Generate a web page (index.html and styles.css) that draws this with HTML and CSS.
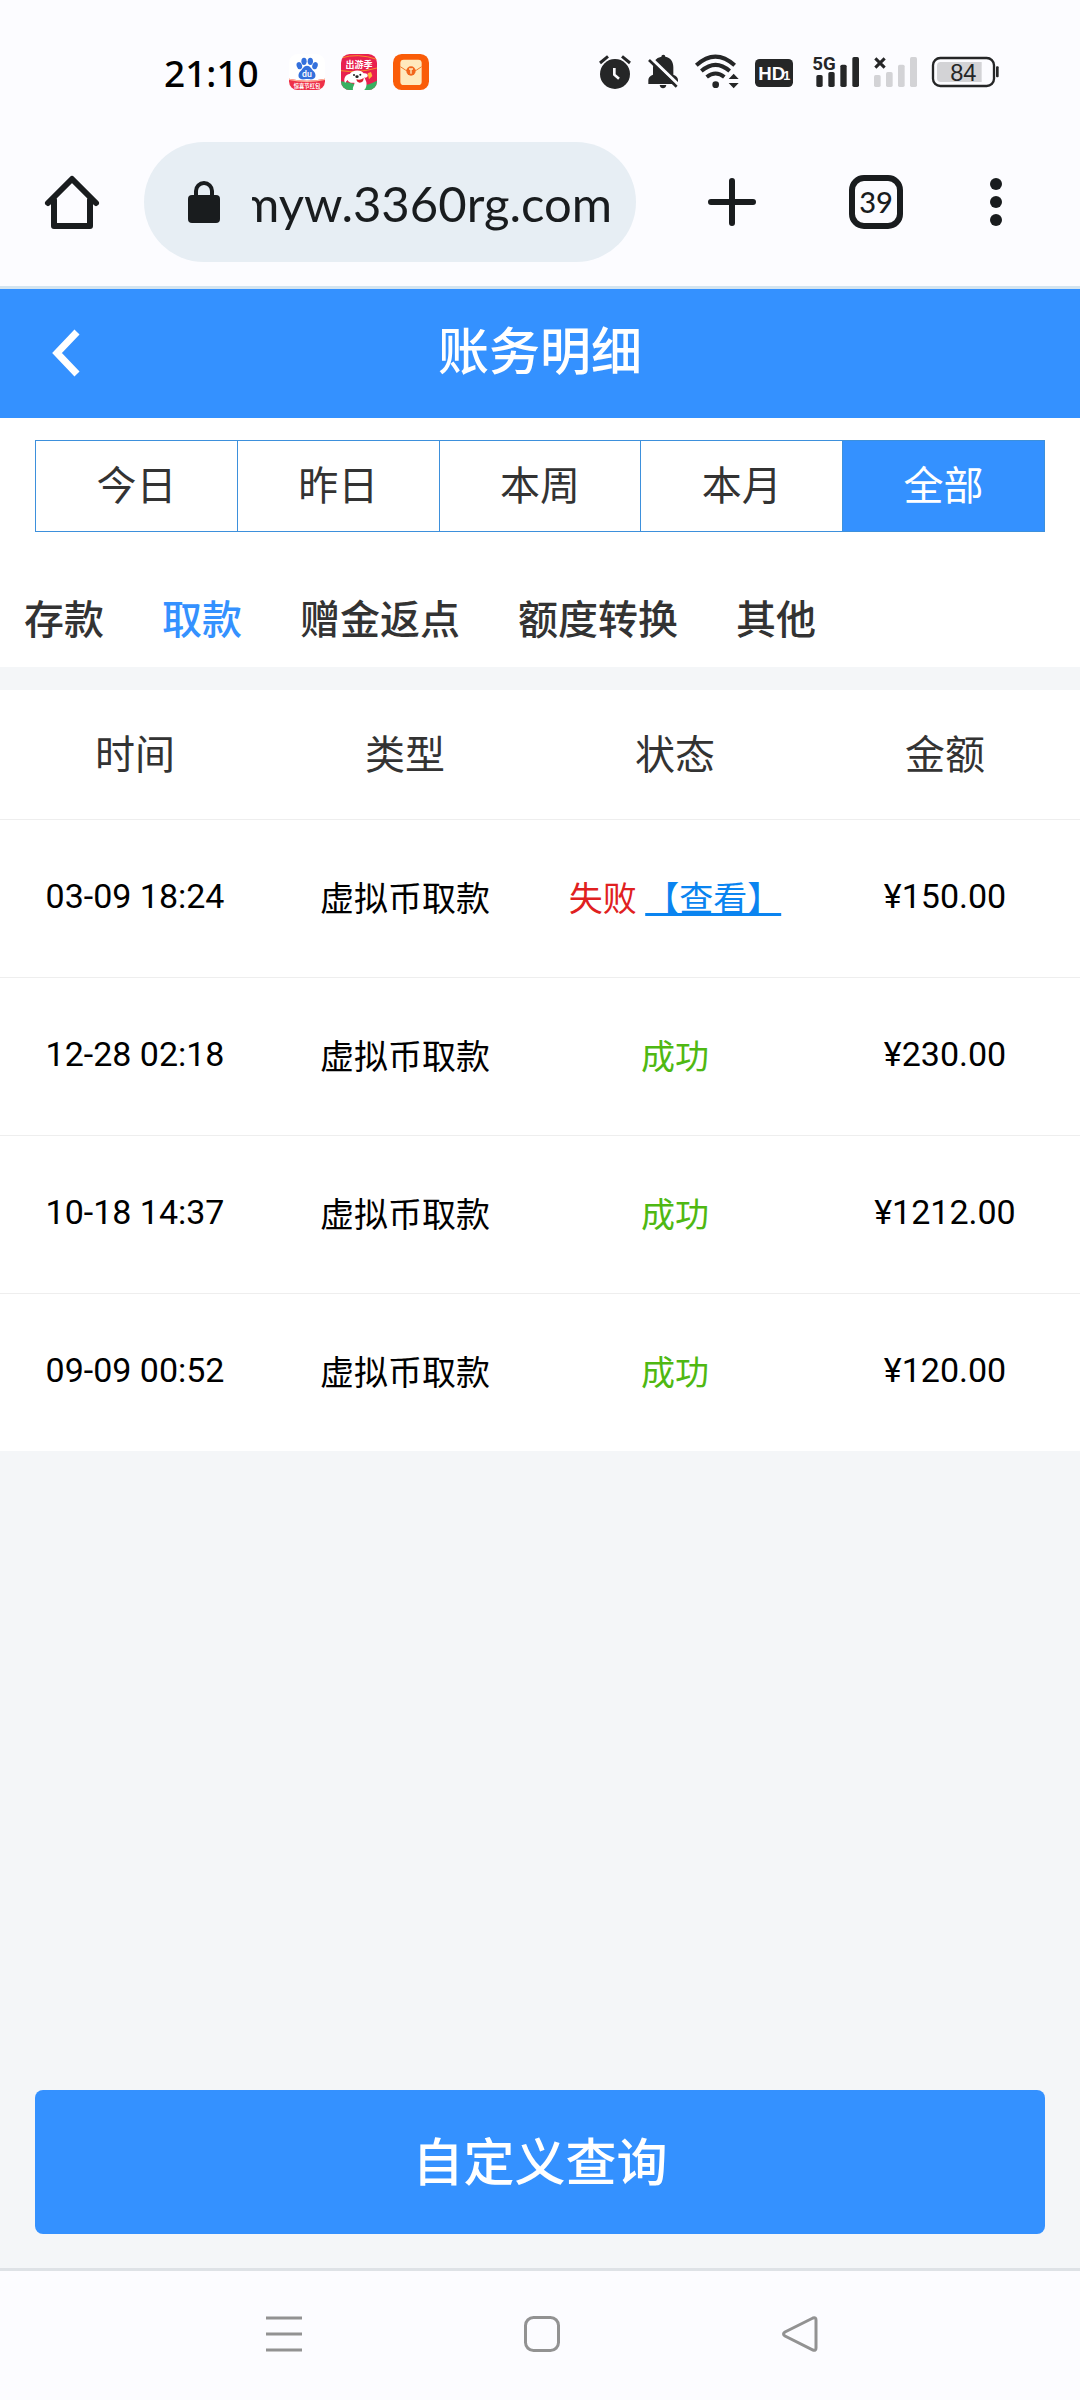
FILE: index.html
```html
<!DOCTYPE html>
<html lang="zh-CN">
<head>
<meta charset="utf-8">
<meta name="viewport" content="width=device-width">
<title>账务明细</title>
<link rel="stylesheet" href="styles.css">
</head>
<body>
<div class="status-bar">
  <span class="clock">21:10</span>
  <div class="app-icons">
    <svg class="app-icon" viewBox="0 0 108 108">
      <defs><clipPath id="tile"><rect width="108" height="108" rx="26"/></clipPath></defs>
      <g clip-path="url(#tile)">
        <rect width="108" height="108" fill="#fff"/>
        <g fill="#3470dc">
          <ellipse cx="31" cy="35" rx="8" ry="11" transform="rotate(-18 31 35)"/>
          <ellipse cx="45" cy="22" rx="8" ry="11"/>
          <ellipse cx="64" cy="22" rx="8" ry="11"/>
          <ellipse cx="78" cy="35" rx="8" ry="11" transform="rotate(18 78 35)"/>
          <path d="M54 35c-10 0-13 10-20 17-8 8-8 22 4 24 7 1 10-1 16-1s9 2 16 1c12-2 12-16 4-24-7-7-10-17-20-17z"/>
        </g>
        <text class="mark" x="54" y="69" font-size="26" text-anchor="middle">du</text>
        <path d="M0 74q54 12 108 0v34H0z" fill="#ee3048"/>
        <path d="M0 74q54 12 108 0v4q-54 12-108 0z" fill="#ffb49a"/>
        <text class="mark" x="54" y="101" font-size="16" text-anchor="middle">惊喜节红包</text>
      </g>
    </svg>
    <svg class="app-icon" viewBox="0 0 108 108">
      <g clip-path="url(#tile)">
        <rect width="108" height="108" fill="#e8204f"/>
        <path d="M0 12q50-16 108 4M0 50q50 8 108-8" fill="none" stroke="#f89028" stroke-width="3"/>
        <path d="M0 82q26 4 50 10t58-12v28H0z" fill="#38b060"/>
        <text class="mark" x="54" y="41" font-size="27" text-anchor="middle">出游季</text>
        <path d="M80 58l10-4 4 12-10 10z" fill="#ffb53c"/>
        <path d="M26 60c8-14 36-14 42-2 6-2 14 2 12 8-2 5-7 6-10 4l6 14c2 10-2 24-8 24H36c-2-10 6-16 4-22-10 2-18-2-20-8-6 4-6 10-8 8-6-10 2-26 14-26z" fill="#fff"/>
        <circle cx="39" cy="63" r="3" fill="#222"/><circle cx="58" cy="62" r="3" fill="#222"/>
        <ellipse cx="48" cy="68" rx="5" ry="4" fill="#222"/>
        <path d="M46 76q12 4 22-4 0 14-12 14-8 0-10-10z" fill="#d82030"/>
      </g>
    </svg>
    <svg class="app-icon" viewBox="0 0 108 108">
      <rect width="108" height="108" rx="26" fill="#fa5c08"/>
      <rect x="22" y="17" width="64" height="76" rx="10" fill="#ffe9bd"/>
      <path d="M22 38q16 14 32 14t32-14" fill="none" stroke="#f07828" stroke-width="3"/>
      <circle cx="54" cy="51" r="14" fill="#f2661c"/>
      <path d="M48 45h12M54 45v14" stroke="#ffe9bd" stroke-width="4"/>
    </svg>
  </div>
  <div class="system-icons">
    <svg width="33" height="36" viewBox="57 42 99 108">
      <circle cx="105" cy="102" r="45"/>
      <path d="M60 69l24-20M150 69l-24-20" stroke="#252627" stroke-width="9"/>
      <path d="M103 84v20l14 12" fill="none" stroke="#fcfcff" stroke-width="8"/>
    </svg>
    <svg width="31" height="36" viewBox="204 42 93 108">
      <path d="M244 50q0-6 6-6t6 6c16 3 24 15 24 32v22q14 6 14 16v12h-89v-12q0-10 14-16V82q0-27 25-32z"/>
      <path d="M239 135h20q-2 10-10 10t-10-10z"/>
      <path d="M212 54l83 80" stroke="#fcfcff" stroke-width="10"/>
      <path d="M207 60l83 80" stroke="#252627" stroke-width="8"/>
    </svg>
    <svg width="44" height="36" viewBox="345 42 132 108">
      <g fill="none" stroke="#252627" stroke-width="12">
        <path d="M349 76q57-52 115 0M364 93q43-37 85 0M380 111q27-21 53 0"/>
      </g>
      <circle cx="407" cy="134" r="10"/>
      <path d="M461 101l15 16h-30zM461 145l15-16h-30z"/>
    </svg>
    <svg width="39" height="36" viewBox="525 42 117 108">
      <rect x="525" y="57" width="114" height="84" rx="14"/>
      <text class="hd" x="535" y="120" font-size="56">HD</text>
      <text class="hd" x="610" y="120" font-size="38">1</text>
    </svg>
    <svg width="48" height="36" viewBox="60 42 144 108">
      <text class="net" x="67" y="89" font-size="56">5G</text>
      <rect x="79" y="105" width="19" height="36" rx="5"/>
      <rect x="115" y="96" width="19" height="45" rx="5"/>
      <rect x="151" y="74" width="19" height="67" rx="5"/>
      <rect x="187" y="51" width="20" height="90" rx="5"/>
    </svg>
    <svg width="42" height="36" viewBox="252 42 126 108">
      <path d="M256 55l28 28M284 55l-28 28" stroke="#252627" stroke-width="9"/>
      <g fill="#d3d3d6">
        <rect x="252" y="105" width="20" height="36" rx="5"/>
        <rect x="288" y="96" width="20" height="45" rx="5"/>
        <rect x="324" y="74" width="20" height="67" rx="5"/>
        <rect x="360" y="51" width="21" height="90" rx="5"/>
      </g>
    </svg>
    <svg width="68" height="36" viewBox="426 42 204 108">
      <rect x="429" y="54" width="183" height="84" rx="22" fill="none" stroke="#252627" stroke-width="7"/>
      <path d="M452 66h123v60H452q-11 0-11-11V77q0-11 11-11z" fill="#d3d3d6"/>
      <rect x="618" y="79" width="8" height="33" rx="3"/>
      <text class="battery" x="520" y="122" font-size="71" text-anchor="middle">84</text>
    </svg>
  </div>
</div>

<nav class="browser-bar" aria-label="浏览器">
  <button class="tool" aria-label="主页">
    <svg width="54" height="54" viewBox="0 0 54 54"><path d="M9 25v26h36V25M3 28L27 4l24 24" fill="none" stroke="#191c1e" stroke-width="6" stroke-linecap="round" stroke-linejoin="round"/></svg>
  </button>
  <label class="address">
    <svg width="32" height="42" viewBox="0 0 32 42"><rect y="14" width="32" height="28" rx="4" fill="#191c1e"/><path d="M8 16V10a8 8 0 0 1 16 0v6" fill="none" stroke="#191c1e" stroke-width="4"/></svg>
    <span class="address-clip"><input class="address-input" type="text" value="myw.3360rg.com" aria-label="网址"></span>
  </label>
  <button class="tool" aria-label="新标签页">
    <svg width="48" height="48" viewBox="0 0 48 48"><path d="M24 3v42M3 24h42" stroke="#191c1e" stroke-width="6" stroke-linecap="round"/></svg>
  </button>
  <button class="tool" aria-label="切换标签页"><span class="tab-count">39</span></button>
  <button class="tool tool-menu" aria-label="菜单">
    <svg width="12" height="48" viewBox="0 0 12 48" fill="#191c1e"><circle cx="6" cy="6" r="6"/><circle cx="6" cy="24" r="6"/><circle cx="6" cy="42" r="6"/></svg>
  </button>
</nav>

<header class="page-header">
  <button class="back" aria-label="返回">
    <svg width="28" height="46" viewBox="0 0 28 46"><path d="M25 2L5 23l20 21" fill="none" stroke="#fff" stroke-width="7"/></svg>
  </button>
  <h1 class="page-title">账务明细</h1>
</header>

<main class="content">
  <section class="filters">
    <div class="ranges">
      <button class="range">今日</button>
      <button class="range">昨日</button>
      <button class="range">本周</button>
      <button class="range">本月</button>
      <button class="range range-active">全部</button>
    </div>
    <div class="tabs">
      <button class="tab">存款</button>
      <button class="tab tab-active">取款</button>
      <button class="tab">赠金返点</button>
      <button class="tab">额度转换</button>
      <button class="tab">其他</button>
    </div>
  </section>

  <table class="records">
    <thead>
      <tr><th>时间</th><th>类型</th><th>状态</th><th>金额</th></tr>
    </thead>
    <tbody>
      <tr><td>03-09 18:24</td><td>虚拟币取款</td><td><span class="failed">失败</span> <a class="view" href="#">【查看】</a></td><td>¥150.00</td></tr>
      <tr><td>12-28 02:18</td><td>虚拟币取款</td><td class="success">成功</td><td>¥230.00</td></tr>
      <tr><td>10-18 14:37</td><td>虚拟币取款</td><td class="success">成功</td><td>¥1212.00</td></tr>
      <tr><td>09-09 00:52</td><td>虚拟币取款</td><td class="success">成功</td><td>¥120.00</td></tr>
    </tbody>
  </table>

  <div class="actions">
    <button class="query">自定义查询</button>
  </div>
</main>

<nav class="system-nav" aria-label="系统导航">
  <button class="nav-key" aria-label="最近任务">
    <svg width="36" height="36" viewBox="0 0 36 36"><path d="M0 2h36M0 18h36M0 34h36" stroke="#929292" stroke-width="3"/></svg>
  </button>
  <button class="nav-key" aria-label="主屏幕">
    <svg width="36" height="36" viewBox="0 0 36 36"><rect x="1.5" y="1.5" width="33" height="33" rx="8" fill="none" stroke="#929292" stroke-width="3"/></svg>
  </button>
  <button class="nav-key" aria-label="返回上一级">
    <svg width="36" height="36" viewBox="0 0 36 36"><path d="M31 2L3 16Q0 18 3 20L31 34Q34 35 34 32V4Q34 1 31 2z" fill="none" stroke="#929292" stroke-width="3"/></svg>
  </button>
</nav>
</body>
</html>
```
FILE: styles.css
```css
* {
  box-sizing: border-box;
}

body {
  margin: 0;
  min-height: 100vh;
  display: flex;
  flex-direction: column;
  background: #f4f6f8;
  color: #000;
  font-family: Roboto, "Noto Sans CJK SC", sans-serif;
}

button {
  margin: 0;
  padding: 0;
  border: 0;
  background: none;
  color: inherit;
  font: inherit;
}

svg {
  display: block;
  flex: none;
  overflow: visible;
}

/* Phone status bar */
.status-bar {
  display: flex;
  height: 118px;
  padding: 26px 80px 0 164px;
  background: #fcfcff;
  fill: #252627;
}

.status-bar > * {
  height: 92px;
  display: flex;
  align-items: center;
}

.clock {
  font: 500 37px "Noto Sans", sans-serif;
}

.app-icons {
  gap: 16px;
  margin-left: 30px;
}

.app-icon {
  width: 36px;
  height: 36px;
}

.system-icons {
  gap: 16px;
  margin-left: auto;
}

.mark {
  fill: #fff;
  font-family: Lato, "Noto Sans CJK SC", sans-serif;
  font-weight: 700;
}

.hd {
  fill: #fcfcff;
  font-family: "Liberation Sans", sans-serif;
  font-weight: 700;
}

.net {
  font-family: Roboto, sans-serif;
  font-weight: 700;
}

.battery {
  font-family: "Liberation Sans", sans-serif;
}

/* Browser toolbar */
.browser-bar {
  display: flex;
  align-items: center;
  height: 171px;
  padding-right: 36px;
  border-bottom: 3px solid #d3e4f0;
  background: #fcfcff;
}

.tool {
  display: flex;
  align-items: center;
  justify-content: center;
  width: 144px;
  height: 120px;
}

.tool-menu {
  width: 96px;
}

.address {
  flex: 1;
  display: flex;
  align-items: center;
  gap: 32px;
  min-width: 0;
  height: 120px;
  margin-right: 24px;
  padding: 0 24px 0 44px;
  border-radius: 60px;
  background: #e7eef4;
}

.address-clip {
  flex: 1;
  display: flex;
  justify-content: flex-end;
  min-width: 0;
  overflow: hidden;
}

.address-input {
  flex: none;
  width: 400px;
  padding: 2px 0 0;
  border: 0;
  background: none;
  color: #191c1e;
  font: 49px/64px Lato, sans-serif;
  text-align: right;
}

.tab-count {
  display: flex;
  align-items: center;
  justify-content: center;
  width: 54px;
  height: 54px;
  border: 6px solid #191c1e;
  border-radius: 15px;
  color: #191c1e;
  font: 500 29px/40px Lato, sans-serif;
}

/* Page header */
.page-header {
  display: grid;
  grid-template-columns: 134px 1fr 134px;
  align-items: center;
  height: 129px;
  background: #3491ff;
  color: #fff;
}

.back {
  display: flex;
  align-items: center;
  height: 129px;
  padding: 0 0 2px 52px;
}

.page-title {
  margin: 0;
  padding-bottom: 2px;
  font-size: 51px;
  font-weight: 500;
  line-height: 64px;
  text-align: center;
}

/* Filters */
.content {
  flex: 1;
  display: flex;
  flex-direction: column;
}

.filters {
  margin-bottom: 23px;
  padding-top: 22px;
  background: #fff;
  color: #333;
  font-size: 40px;
}

.ranges {
  display: flex;
  margin: 0 35px 41px;
  border: 1px solid #3d90dc;
}

.range {
  flex: 1;
  height: 90px;
  padding-bottom: 6px;
}

.range + .range {
  border-left: 1px solid #3d90dc;
}

.range-active {
  background: #3491ff;
  color: #fff;
}

.tabs {
  display: flex;
  gap: 58px;
  padding: 0 24px;
}

.tab {
  height: 94px;
  padding-bottom: 6px;
  font-weight: 500;
}

.tab-active {
  color: #3491ff;
}

/* Records */
.records {
  width: 100%;
  table-layout: fixed;
  border-collapse: collapse;
  background: #fff;
  font-size: 34px;
  text-align: center;
}

.records th,
.records td {
  height: 158px;
  padding: 0 0 4px;
  border-bottom: 1px solid #eee;
}

.records th {
  height: 129px;
  color: #333;
  font-size: 40px;
  font-weight: 400;
}

.records tbody tr:last-child td {
  border-bottom: 0;
}

.records .failed {
  color: #e02020;
}

.records .success {
  color: #4fb812;
}

.view {
  color: #0a84f0;
  text-decoration-thickness: 3px;
}

.actions {
  margin-top: auto;
  padding: 34px 35px;
}

.query {
  width: 100%;
  height: 144px;
  padding-bottom: 6px;
  border-radius: 8px;
  background: #3491ff;
  color: #fff;
  font-size: 51px;
  font-weight: 500;
}

/* Phone navigation keys */
.system-nav {
  display: flex;
  justify-content: center;
  gap: 222px;
  height: 132px;
  padding: 0 0 3px 4px;
  border-top: 3px solid #dee2e6;
  background: #fcfcff;
}

.nav-key {
  display: flex;
  align-items: center;
}
```
